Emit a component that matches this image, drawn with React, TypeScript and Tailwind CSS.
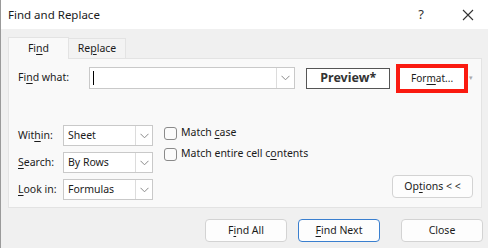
import React from 'react';

const Chevron = () => (
  <svg width="9" height="6" viewBox="0 0 9 6" fill="none">
    <polyline points="0.5,0.8 4.5,4.8 8.5,0.8" stroke="#8a8a8a" strokeWidth="1" />
  </svg>
);

const U = ({ children }: { children: React.ReactNode }) => <span className="underline underline-offset-2">{children}</span>;

const Select = ({ value }: { value: string }) => (
  <div className="flex h-[21px] w-[90px] border border-[#c9c9c9] bg-white">
    <div className="flex flex-1 items-center pl-[4px] text-[10.5px] text-[#1b1b1b]">{value}</div>
    <div className="flex w-[17px] items-center justify-center border-l border-[#dcdcdc]">
      <Chevron />
    </div>
  </div>
);

const Checkbox = ({ children }: { children: React.ReactNode }) => (
  <div className="flex h-[14px] items-center gap-[4px]">
    <div className="h-[13px] w-[13px] rounded-[3px] border border-[#8a8a8a] bg-[#fbfbfb]" />
    <span className="text-[10.5px] text-[#1b1b1b]">{children}</span>
  </div>
);

const Button = ({ children, primary }: { children: React.ReactNode; primary?: boolean }) => (
  <div
    className={
      'flex h-[23px] w-[82px] items-center justify-center rounded-[4px] bg-[#fdfdfd] text-[10.5px] text-[#1b1b1b] ' +
      (primary ? 'border border-[#3a7fcf]' : 'border border-[#d3d3d3]')
    }
  >
    {children}
  </div>
);

export default function App() {
  return (
    <div
      className="h-[248px] w-[488px] overflow-hidden border-l border-[#9a9a9a] bg-[#f0f0f0]"
      style={{ fontFamily: '"Noto Sans", "Open Sans", sans-serif' }}
    >
      {/* title bar */}
      <div className="flex h-[29px] items-center bg-white pl-[7px] pr-[14px]">
        <span className="flex-1 text-[11.5px] text-[#1b1b1b]">Find and Replace</span>
        <span className="mr-[38px] text-[13px] text-[#333]">?</span>
        <svg width="12" height="12" viewBox="0 0 12 12">
          <path d="M1 1 L11 11 M11 1 L1 11" stroke="#333" strokeWidth="1.1" />
        </svg>
      </div>

      {/* tabs */}
      <div className="flex h-[29px] items-end pl-[7px]">
        <div className="-mb-px flex h-[22px] w-[61px] items-center justify-center border border-b-0 border-[#e3e3e3] bg-[#f9f9f9] text-[10.5px] text-[#1b1b1b]">
          Fi<U>n</U>d
        </div>
        <div className="flex h-[20px] w-[57px] items-center justify-center border border-b-0 border-l-0 border-[#e3e3e3] bg-[#f3f3f3] text-[10.5px] text-[#1b1b1b]">
          Re<U>p</U>lace
        </div>
      </div>

      {/* panel */}
      <div className="ml-[7px] flex h-[150px] w-[474px] flex-col border border-[#e3e3e3] bg-[#f9f9f9] pl-[9px] pr-[8px] pt-[8px]">
        <div className="flex h-[22px] items-center">
          <span className="w-[71px] text-[10.5px] text-[#1b1b1b]">
            Fi<U>n</U>d what:
          </span>
          <div className="flex h-[22px] w-[207px] border border-[#c9c9c9] bg-white">
            <div className="flex flex-1 items-center pl-[3px]">
              <div className="h-[14px] w-px bg-black" />
            </div>
            <div className="flex w-[18px] items-center justify-center border-l border-[#dcdcdc]">
              <Chevron />
            </div>
          </div>
          <div className="ml-[11px] flex h-[21px] w-[84px] items-center justify-center border border-[#555] bg-white text-[12.5px] font-bold text-[#333]">
            Preview*
          </div>
          <div className="relative ml-[6px] flex h-[29px] w-[72px] items-center border-[4px] border-[#fa1a10] bg-[#f9f9f9]">
            <div className="flex h-[21px] flex-1 items-center justify-center bg-white text-[10px] text-[#1b1b1b]">
              For<U>m</U>at...
            </div>
          </div>
          <span className="ml-[1px] text-[7px] text-[#aaa]">▾</span>
        </div>

        <div className="mt-[36px] flex">
          <div className="flex flex-col gap-[6px]">
            <div className="flex items-center">
              <span className="w-[45px] text-[10.5px] text-[#1b1b1b]">
                Wit<U>h</U>in:
              </span>
              <Select value="Sheet" />
            </div>
            <div className="flex items-center">
              <span className="w-[45px] text-[10.5px] text-[#1b1b1b]">
                <U>S</U>earch:
              </span>
              <Select value="By Rows" />
            </div>
            <div className="flex items-center">
              <span className="w-[45px] text-[10.5px] text-[#1b1b1b]">
                <U>L</U>ook in:
              </span>
              <Select value="Formulas" />
            </div>
          </div>
          <div className="ml-[11px] flex flex-col gap-[7px] pt-[1px]">
            <Checkbox>
              Match <U>c</U>ase
            </Checkbox>
            <Checkbox>
              Match entire cell c<U>o</U>ntents
            </Checkbox>
          </div>
          <div className="flex flex-1 items-end justify-end pb-[2px]">
            <div className="flex h-[23px] w-[81px] items-center justify-center rounded-[4px] border border-[#d3d3d3] bg-[#fdfdfd] text-[10.5px] text-[#1b1b1b]">
              Op<U>t</U>ions &lt; &lt;
            </div>
          </div>
        </div>
      </div>

      {/* bottom buttons */}
      <div className="mt-[11px] flex justify-end pr-[5px]">
        <Button>
          F<U>i</U>nd All
        </Button>
        <div className="ml-[11px]">
          <Button primary>
            <U>F</U>ind Next
          </Button>
        </div>
        <div className="ml-[21px]">
          <Button>Close</Button>
        </div>
      </div>
    </div>
  );
}
